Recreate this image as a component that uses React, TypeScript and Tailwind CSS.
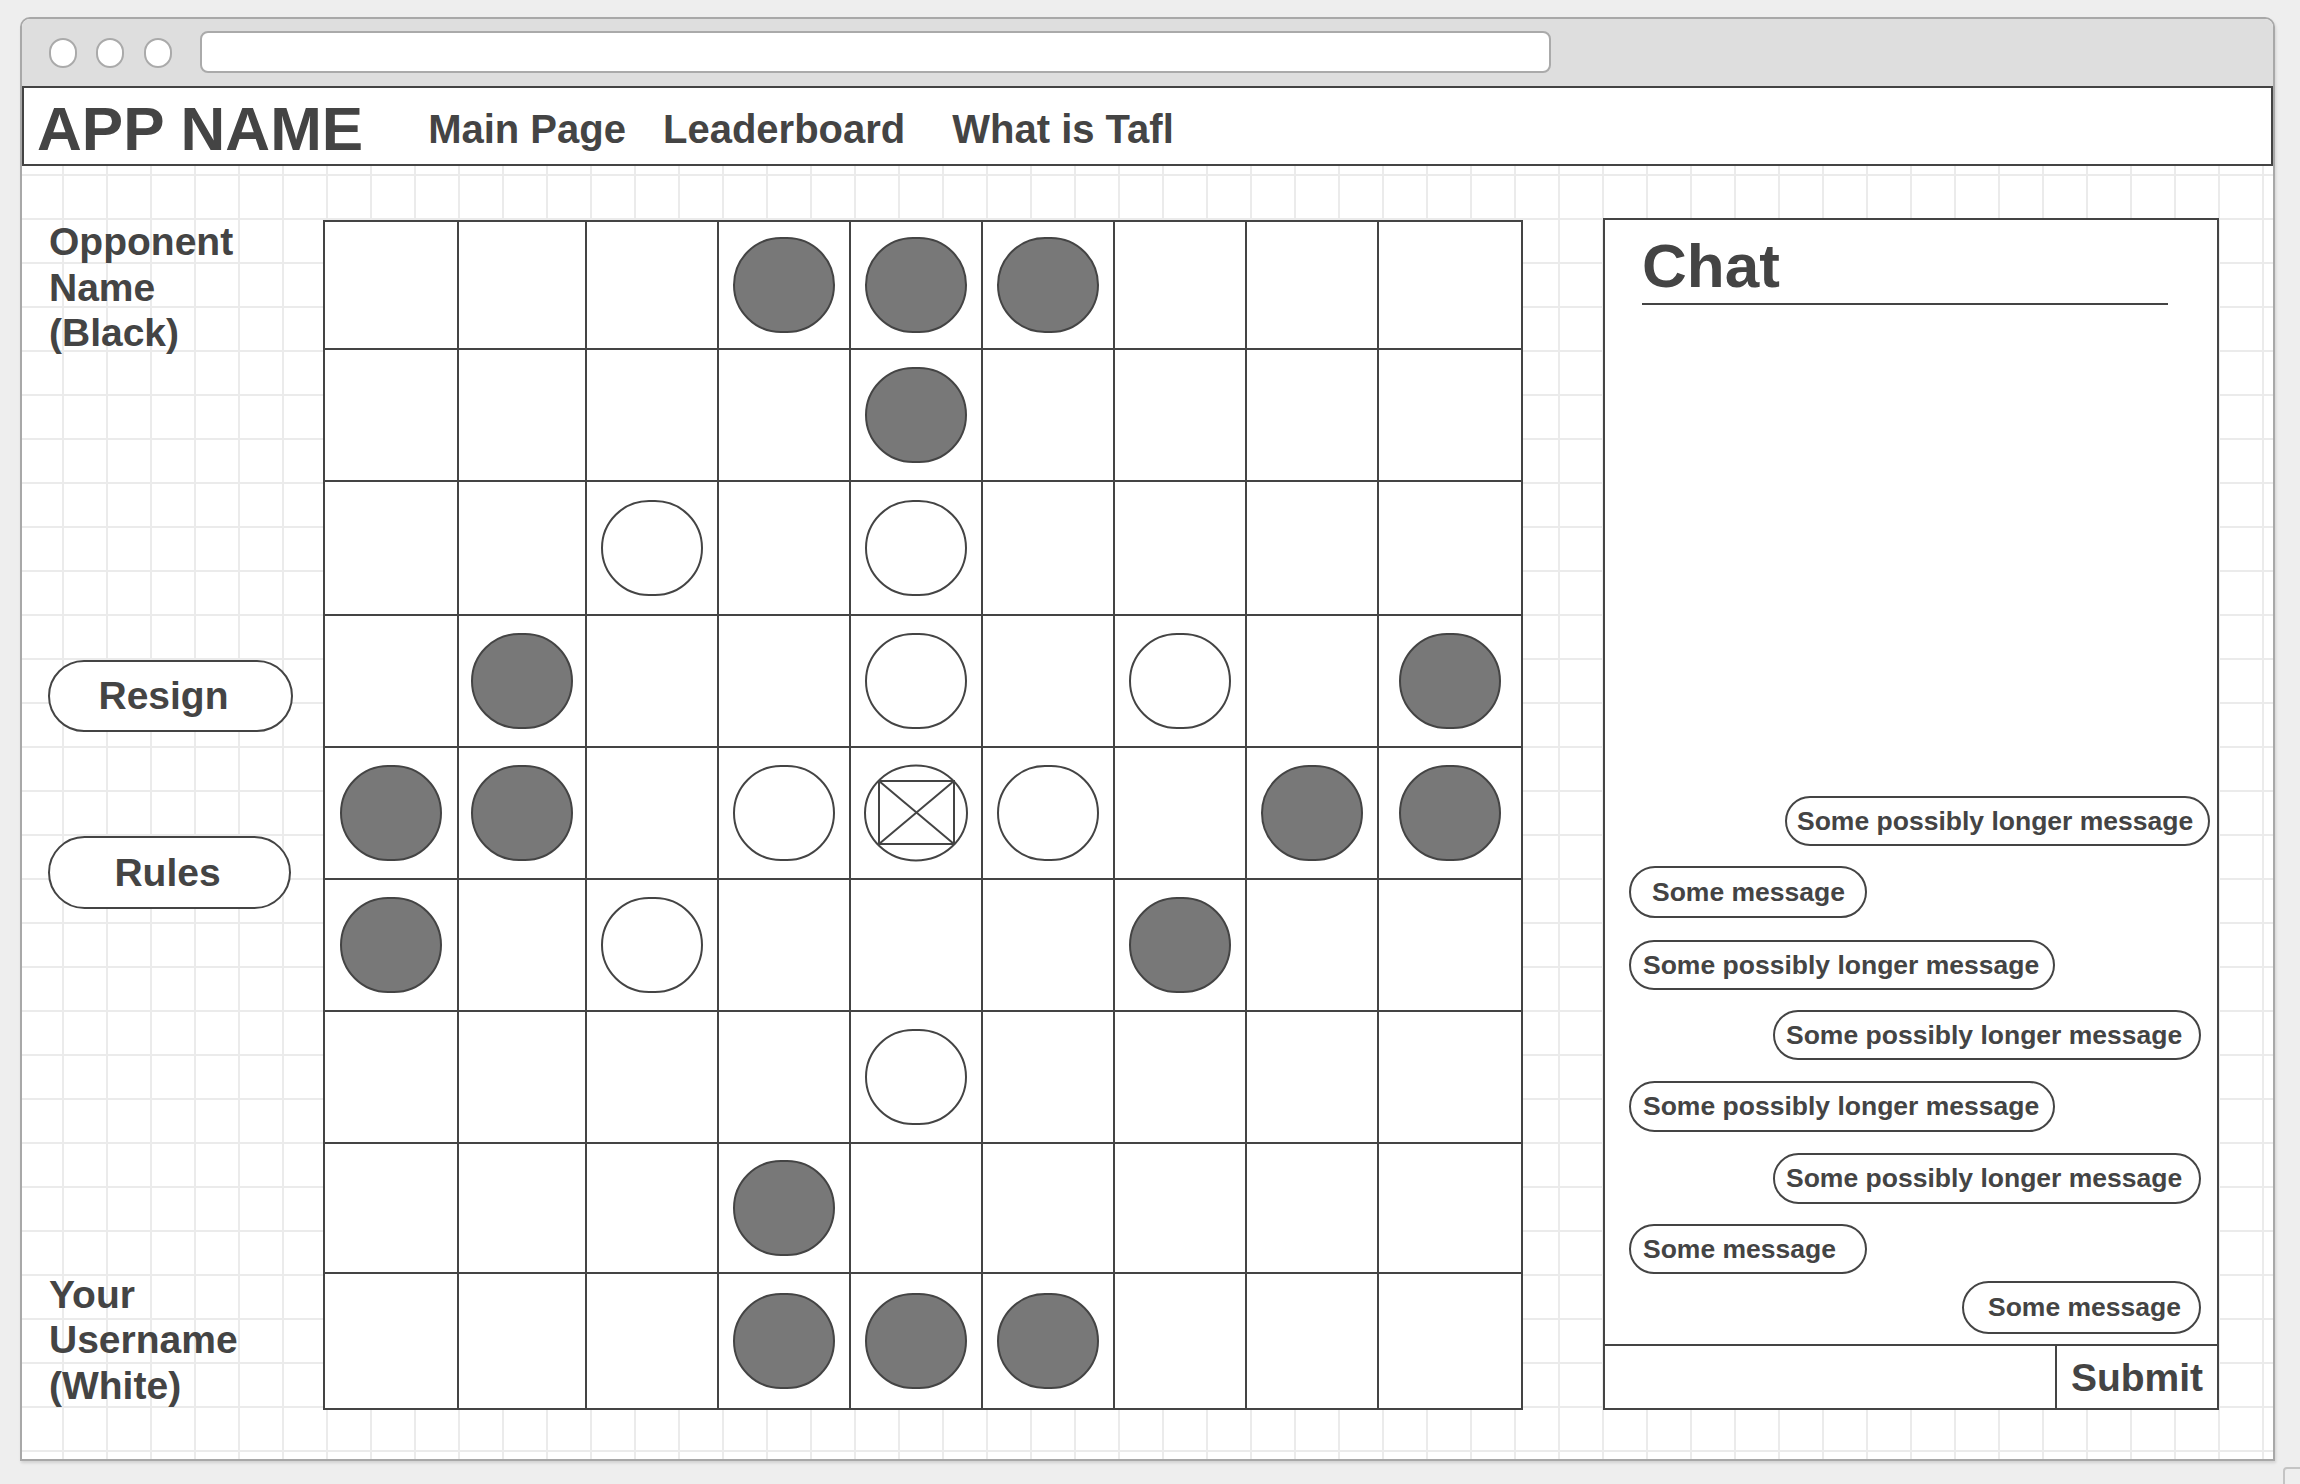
import React from "react";

const BOARD = [
  "...BBB...",
  "....B....",
  "..W.W....",
  ".B..W.W.B",
  "BB.WKW.BB",
  "B.W...B..",
  "....W....",
  "...B.....",
  "...BBB...",
];

function Piece({ kind }: { kind: string }) {
  if (kind === "B")
    return <div className="w-[102px] h-[96px] rounded-full bg-[#787878] border-2 border-[#444]" />;
  if (kind === "W")
    return <div className="w-[102px] h-[96px] rounded-full bg-white border-2 border-[#444]" />;
  if (kind === "K")
    return (
      <svg width="104" height="98" viewBox="0 0 104 98" className="block">
        <ellipse cx="52" cy="49" rx="51" ry="47.5" fill="white" stroke="#444" strokeWidth="2" />
        <rect x="15" y="17" width="75" height="63" fill="none" stroke="#444" strokeWidth="2" />
        <line x1="15" y1="17" x2="90" y2="80" stroke="#444" strokeWidth="2" />
        <line x1="90" y1="17" x2="15" y2="80" stroke="#444" strokeWidth="2" />
      </svg>
    );
  return null;
}

type Msg = { text: string; side: "l" | "r"; w: string; h: string; mt: string; pl: string; mr: string };

const MSGS: Msg[] = [
  { text: "Some possibly longer message", side: "r", w: "w-[425px]", h: "h-[50px]", mt: "mt-0", pl: "pl-[10px]", mr: "mr-[7px]" },
  { text: "Some message", side: "l", w: "w-[238px]", h: "h-[52px]", mt: "mt-[20px]", pl: "pl-[21px]", mr: "mr-0" },
  { text: "Some possibly longer message", side: "l", w: "w-[426px]", h: "h-[50px]", mt: "mt-[22px]", pl: "pl-[12px]", mr: "mr-0" },
  { text: "Some possibly longer message", side: "r", w: "w-[428px]", h: "h-[50px]", mt: "mt-[20px]", pl: "pl-[11px]", mr: "mr-[16px]" },
  { text: "Some possibly longer message", side: "l", w: "w-[426px]", h: "h-[51px]", mt: "mt-[21px]", pl: "pl-[12px]", mr: "mr-0" },
  { text: "Some possibly longer message", side: "r", w: "w-[428px]", h: "h-[51px]", mt: "mt-[21px]", pl: "pl-[11px]", mr: "mr-[16px]" },
  { text: "Some message", side: "l", w: "w-[238px]", h: "h-[50px]", mt: "mt-[20px]", pl: "pl-[12px]", mr: "mr-0" },
  { text: "Some message", side: "r", w: "w-[239px]", h: "h-[53px]", mt: "mt-[7px]", pl: "pl-[24px]", mr: "mr-[16px]" },
];

export default function App() {
  return (
    <div className="relative w-[2300px] h-[1484px] bg-[#eeeeee] overflow-hidden font-['Liberation_Sans',Arial,sans-serif] text-[#444] font-bold">
      {/* window */}
      <div className="ml-[20px] mt-[17px] w-[2255px] h-[1444px] border-2 border-[#a8a8a8] rounded-t-[10px] flex flex-col bg-white shadow-[1px_2px_3px_rgba(0,0,0,0.12)]">
        {/* title bar */}
        <div className="h-[67px] shrink-0 bg-[#dedede] rounded-t-[8px] flex items-center pl-[27px]">
          <div className="w-[28px] h-[30px] rounded-full bg-white border-2 border-[#aaa]" />
          <div className="ml-[19px] w-[28px] h-[30px] rounded-full bg-white border-2 border-[#aaa]" />
          <div className="ml-[20px] w-[28px] h-[30px] rounded-full bg-white border-2 border-[#aaa]" />
          <div className="ml-[28px] w-[1351px] h-[42px] -mt-[2px] rounded-[8px] bg-white border-2 border-[#aaa]" />
        </div>
        {/* nav */}
        <div className="h-[80px] shrink-0 border-2 border-[#444] bg-white flex items-start">
          <div className="ml-[13px] mt-[10px] text-[62px] leading-none">APP NAME</div>
          <div className="ml-[65px] mt-[21px] text-[40px] leading-none">Main Page</div>
          <div className="ml-[37px] mt-[21px] text-[40px] leading-none">Leaderboard</div>
          <div className="ml-[47px] mt-[21px] text-[40px] leading-none">What is Tafl</div>
        </div>
        {/* content */}
        <div className="flex-1 flex items-start pl-[26px] pt-[52px] bg-white bg-[linear-gradient(to_right,#ebebeb_2px,transparent_2px),linear-gradient(to_bottom,#ebebeb_2px,transparent_2px)] bg-size-[44px_44px] bg-position-[40px_8px]">
          {/* left column */}
          <div className="w-[275px] h-[1188px] mt-[2px] flex flex-col">
            <div className="pl-[1px] text-[39px] leading-[45.5px] -mt-[1px]">
              Opponent<br />Name<br />(Black)
            </div>
            <div className="mt-[304px] w-[245px] h-[72px] rounded-full border-2 border-[#444] bg-white flex items-center justify-center pr-[14px] text-[39px] leading-none">
              Resign
            </div>
            <div className="mt-[104px] w-[243px] h-[73px] rounded-full border-2 border-[#444] bg-white flex items-center justify-center pr-[4px] text-[39px] leading-none">
              Rules
            </div>
            <div className="flex-1" />
            <div className="pl-[1px] text-[39px] leading-[45.5px]">
              Your<br />Username<br />(White)
            </div>
          </div>
          {/* board */}
          <div className="mt-[2px] w-[1200px] h-[1190px] border-2 border-[#444] bg-white grid grid-cols-[134px_128px_132px_132px_132px_132px_132px_132px_142px] grid-rows-[128px_132px_134px_132px_132px_132px_132px_130px_134px]">
            {BOARD.map((row, r) =>
              row.split("").map((k, c) => (
                <div
                  key={`${r}-${c}`}
                  className={`border-[#444] flex items-center justify-center ${c < 8 ? "border-r-2" : ""} ${r < 8 ? "border-b-2" : ""}`}
                >
                  <Piece kind={k} />
                </div>
              ))
            )}
          </div>
          {/* chat */}
          <div className="ml-[80px] w-[616px] h-[1192px] border-2 border-[#444] bg-white flex flex-col">
            <div className="pl-[37px] pt-[15px] text-[62px] leading-none">Chat</div>
            <div className="ml-[37px] mt-[6px] w-[526px] h-[2px] bg-[#444]" />
            <div className="flex-1 flex flex-col justify-end pb-[10px]">
              {MSGS.map((m, i) => (
                <div
                  key={i}
                  className={`${m.w} ${m.h} ${m.mt} ${m.pl} ${m.side === "l" ? "self-start ml-[24px]" : "self-end"} ${m.mr} shrink-0 rounded-full border-2 border-[#444] bg-white flex items-center text-[26.5px] leading-none whitespace-nowrap`}
                >
                  {m.text}
                </div>
              ))}
            </div>
            <div className="h-[64px] shrink-0 border-t-2 border-[#444] flex">
              <div className="flex-1" />
              <div className="w-[162px] border-l-2 border-[#444] flex items-center justify-center text-[39px] leading-none">
                Submit
              </div>
            </div>
          </div>
        </div>
      </div>
      {/* resize corner */}
      <div className="absolute left-[2283px] top-[1467px] w-[30px] h-[30px] border-2 border-[#c4c4c4] rounded-[4px]" />
    </div>
  );
}
